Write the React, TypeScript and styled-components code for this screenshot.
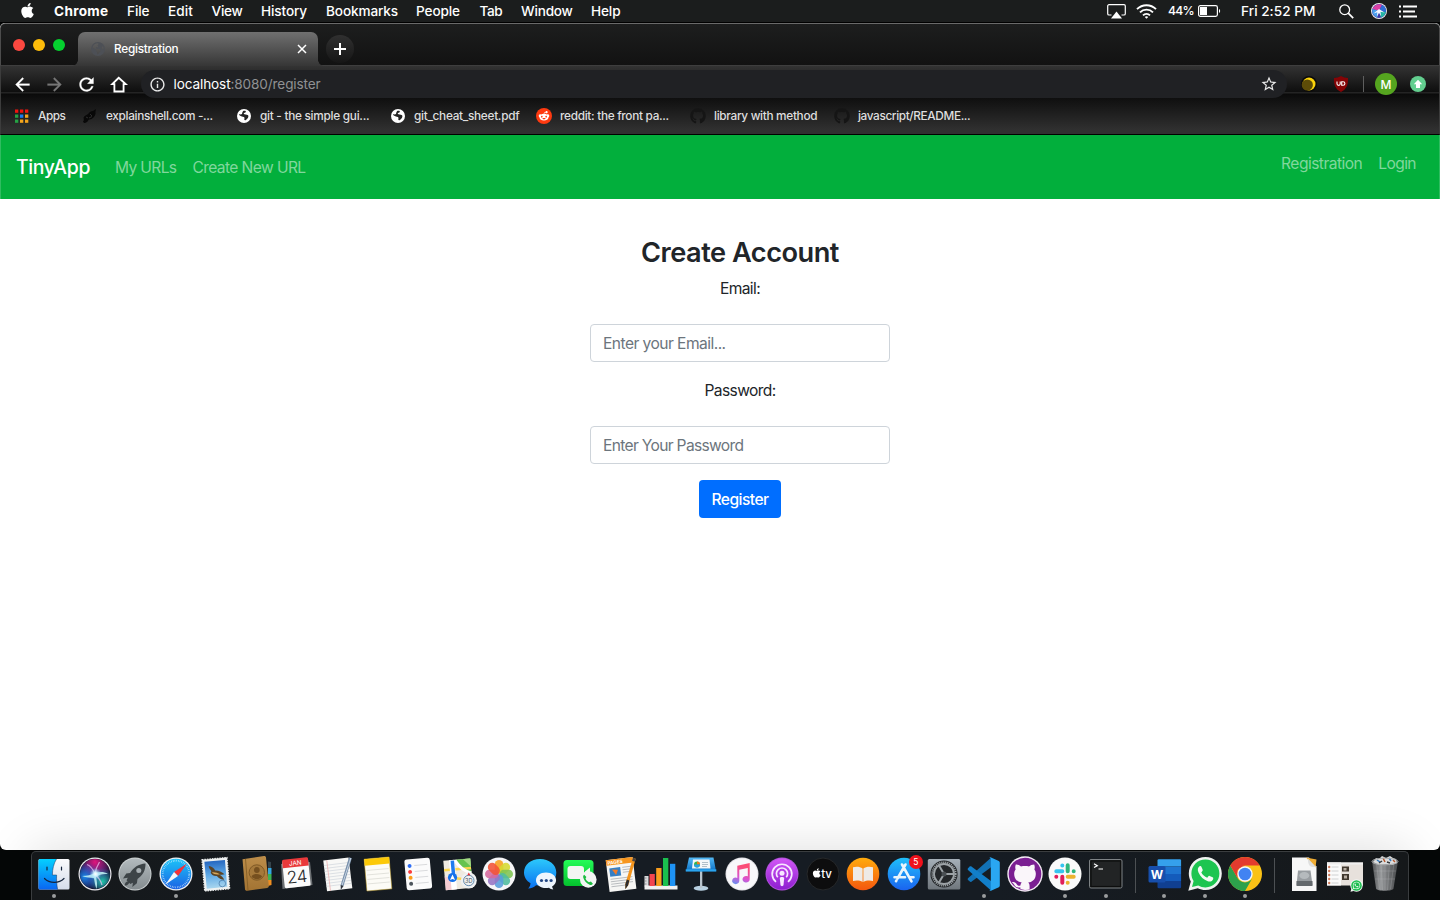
import React from 'react';
import styled, { createGlobalStyle, css } from 'styled-components';
import { FaApple, FaEarthAmericas, FaGithub, FaRedditAlien, FaWhatsapp } from 'react-icons/fa6';
import { MdArrowBack, MdArrowForward, MdRefresh, MdStarBorder, MdInfoOutline } from 'react-icons/md';

const Global = createGlobalStyle`
  * { box-sizing: border-box; }
  body { margin: 0; background: #050707; font-family: Inter, "Liberation Sans", sans-serif; overflow: hidden; }
`;

const Desktop = styled.div`
  width: 1440px;
  height: 900px;
  display: flex;
  flex-direction: column;
  background: #050707;
`;

/* ---------- menu bar ---------- */

const MenuBar = styled.header`
  flex: none;
  height: 23px;
  display: flex;
  justify-content: space-between;
  align-items: center;
  padding: 0 22px 0 19px;
  background: #1b1d1d;
  border-bottom: 1px solid #000;
  color: #fff;
`;

const MenuGroup = styled.div`
  display: flex;
  align-items: center;
  height: 22px;
`;

const AppleSlot = styled.span`
  width: 35px;
  display: flex;
  svg { width: 17px; height: 17px; margin-top: -2px; }
`;

const MenuItem = styled.span<{ $w: number; $ls?: number; $bold?: boolean }>`
  width: ${(p) => p.$w}px;
  font-size: 13.6px;
  line-height: 22px;
  font-weight: ${(p) => (p.$bold ? 700 : 500)};
  letter-spacing: ${(p) => p.$ls ?? -0.12}px;
  white-space: nowrap;
`;

const Status = styled.span<{ $w: number }>`
  width: ${(p) => p.$w}px;
  display: flex;
  align-items: center;
  flex: none;
  svg { display: block; }
`;

const Percent = styled.span`
  width: 30px;
  font-size: 12.2px;
  font-weight: 500;
  letter-spacing: -0.75px;
  line-height: 22px;
`;

const menus = [
  { label: 'Chrome', w: 73, ls: 0.32, bold: true },
  { label: 'File', w: 41 },
  { label: 'Edit', w: 43.5, ls: 0.09 },
  { label: 'View', w: 49.5, ls: -0.25 },
  { label: 'History', w: 65 },
  { label: 'Bookmarks', w: 90 },
  { label: 'People', w: 63.5 },
  { label: 'Tab', w: 41.5, ls: -0.4 },
  { label: 'Window', w: 70, ls: -0.2 },
  { label: 'Help', w: 32 },
];

/* ---------- browser window ---------- */

const Window = styled.main`
  flex: none;
  height: 827px;
  display: flex;
  flex-direction: column;
  border-radius: 5px 5px 6px 6px;
  overflow: hidden;
  background: #fff;
`;

const TabStrip = styled.div`
  flex: none;
  height: 43px;
  display: flex;
  align-items: flex-end;
  padding-left: 12px;
  border: 1px solid #4c4c4c;
  border-top-color: #6a6a6a;
  border-radius: 5px 5px 0 0;
  border-bottom-color: #3e3e3e;
  background: linear-gradient(#1d1e1e, #121212);
`;

const Lights = styled.div`
  display: flex;
  gap: 8px;
  width: 65px;
  padding-bottom: 14px;
`;

const Light = styled.i<{ $c: string }>`
  width: 12px;
  height: 12px;
  border-radius: 50%;
  background: ${(p) => p.$c};
`;

const Tab = styled.div`
  position: relative;
  width: 240px;
  height: 34px;
  margin-bottom: -1px;
  display: flex;
  align-items: center;
  padding: 0 10px 1px 13px;
  border-radius: 7px 7px 0 0;
  color: #fff;
  background: linear-gradient(#707070, #363636);
  > svg:first-child { width: 14px; height: 14px; color: #4d5056; margin-right: 9px; }
  > svg:last-child { width: 12px; height: 12px; }
  &::before, &::after {
    content: '';
    position: absolute;
    bottom: 0;
    width: 6px;
    height: 6px;
  }
  &::before { left: -6px; background: radial-gradient(circle at 0 0, transparent 5.5px, #383838 6px); }
  &::after { right: -6px; background: radial-gradient(circle at 100% 0, transparent 5.5px, #383838 6px); }
`;

const TabTitle = styled.span`
  flex: 1;
  font-size: 11.8px;
  font-weight: 500;
  letter-spacing: -0.26px;
`;

const NewTab = styled.div`
  width: 28px;
  height: 28px;
  margin: 0 0 2px 8px;
  border-radius: 50%;
  display: flex;
  align-items: center;
  justify-content: center;
  color: #fff;
  background: linear-gradient(#303030, #161616);
`;

const Controls = styled.div`
  flex: none;
  height: 69px;
  border: solid #3c3c3c;
  border-width: 0 1px;
  border-bottom: 1px solid #000;
  background: linear-gradient(#333 0, #0e0e0e 26px, #242424 26px, #242424 27px, #0a0a0a 28px, #111 34px, #303030 64px);
`;

const Toolbar = styled.div`
  height: 36px;
  display: flex;
  align-items: center;
  padding-left: 5px;
`;

const NavButton = styled.span<{ $dim?: boolean }>`
  width: 32px;
  flex: none;
  display: flex;
  justify-content: center;
  color: ${(p) => (p.$dim ? '#777' : '#fff')};
  svg { width: 21px; height: 21px; display: block; }
  path:not([fill='none']) { stroke: currentColor; stroke-width: 0.3; }
`;

const HomeGlyph = styled.svg`
  && path { stroke-width: 2.1; }
`;

const Omnibox = styled.div`
  width: 1146px;
  flex: none;
  height: 28px;
  margin-left: 7px;
  border-radius: 14px;
  display: flex;
  align-items: center;
  padding: 0 9px 0 8px;
  background: #202124;
  > svg { width: 17px; height: 17px; color: #e8e8e8; }
  > svg:last-child { width: 18px; height: 18px; }
`;

const Address = styled.span`
  flex: 1;
  padding-left: 7.5px;
  font-size: 13.6px;
  letter-spacing: -0.12px;
  color: #909193;
  b { font-weight: 400; color: #fff; }
`;

const Extension = styled.span<{ $w: number }>`
  width: ${(p) => p.$w}px;
  flex: none;
  display: flex;
  justify-content: center;
`;

const Divider = styled.i`
  width: 1px;
  height: 16px;
  background: #5e5e5e;
`;

const Avatar = styled.span`
  width: 22px;
  height: 22px;
  flex: none;
  border-radius: 50%;
  display: flex;
  align-items: center;
  justify-content: center;
  background: #55a51f;
  color: #fff;
  font-size: 12px;
  font-weight: 500;
`;

const Bookmarks = styled.nav`
  height: 28px;
  display: flex;
  align-items: center;
  padding-left: 13px;
`;

const Bookmark = styled.a<{ $w: number; $ls: number }>`
  width: ${(p) => p.$w}px;
  display: flex;
  align-items: center;
  font-size: 11.8px;
  font-weight: 500;
  letter-spacing: ${(p) => p.$ls}px;
  white-space: nowrap;
  color: #dedede;
  > svg { width: 16px; height: 16px; margin-right: 8px; flex: none; }
`;

/* ---------- page ---------- */

const Navbar = styled.nav`
  flex: none;
  height: 64px;
  display: flex;
  align-items: center;
  padding: 0 23px 0 15px;
  border: solid #2fbd60;
  border-width: 0 1px;
  background: #02af3c;
`;

const Brand = styled.a`
  width: 99px;
  font-size: 19.4px;
  font-weight: 500;
  letter-spacing: -0.35px;
  color: #fff;
`;

const NavLink = styled.a<{ $ls?: number }>`
  margin-right: 16px;
  font-size: 15.6px;
  font-weight: 430;
  letter-spacing: ${(p) => p.$ls ?? -0.6}px;
  color: #80d79d;
  &:last-child { margin-right: 0; }
`;

const Account = styled.div`
  display: flex;
  margin-left: auto;
  padding-bottom: 8px;
`;

const Form = styled.form`
  display: flex;
  flex-direction: column;
  align-items: center;
  padding: 37px 0 0 40px;
  color: #212529;
`;

const Title = styled.h3`
  margin: 0 0 8px;
  font-size: 27.2px;
  line-height: 34px;
  font-weight: 570;
  letter-spacing: -0.5px;
`;

const Label = styled.label`
  height: 24px;
  margin: -1px 0 23px;
  font-size: 15.6px;
  font-weight: 430;
  line-height: 24px;
  letter-spacing: -0.63px;
`;

const Field = styled.input<{ $ls: number }>`
  width: 300px;
  height: 38px;
  margin-bottom: 18px;
  padding: 0 12px;
  border: 1px solid #ced4da;
  border-radius: 4px;
  font: 430 15.6px Inter, sans-serif;
  letter-spacing: ${(p) => p.$ls}px;
  &::placeholder { color: #6c757d; opacity: 1; }
`;

const Submit = styled.button`
  width: 82px;
  height: 38px;
  margin-top: -2px;
  padding: 0;
  border: 0;
  border-radius: 4px;
  background: #006eff;
  color: #fff;
  font: 500 15.6px Inter, sans-serif;
  letter-spacing: -0.55px;
`;

/* ---------- dock ---------- */

const Dock = styled.footer`
  position: relative;
  flex: none;
  align-self: flex-start;
  width: 1378px;
  height: 49px;
  margin: 1px 0 0 31px;
  padding: 2px 0 0 2.2px;
  display: flex;
  border: 1px solid #3a3d3f;
  border-bottom: 0;
  border-radius: 5px 5px 0 0;
  background: linear-gradient(90deg, #15181a, #161c23 30%, #161c23 70%, #15181a);
  box-shadow: 0 0 50px rgba(0, 0, 0, 0.15);
`;

const Slot = styled.div<{ $open?: boolean }>`
  position: relative;
  width: 40.45px;
  height: 46px;
  display: flex;
  justify-content: center;
  > svg { width: 40px; height: 40px; flex: none; overflow: visible; }
  ${(p) => p.$open && css`
    &::after {
      content: '';
      position: absolute;
      bottom: 2px;
      left: 18px;
      width: 4px;
      height: 4px;
      border-radius: 50%;
      background: #9a9c9e;
    }
  `}
`;

const Badge = styled.span`
  position: absolute;
  top: 1px;
  right: 1px;
  width: 14px;
  height: 14px;
  border-radius: 50%;
  background: #f0121c;
  color: #fff;
  font-size: 8.5px;
  line-height: 14px;
  text-align: center;
`;

const DockRule = styled.i`
  width: 1px;
  height: 35px;
  margin: 4px 8.7px 0;
  background: #4c5053;
`;

/* ---------- icons ---------- */

const Grad = ({ id, stops, x2 = 0, y2 = 1 }: { id: string; stops: string[]; x2?: number; y2?: number }) => (
  <linearGradient id={id} x1="0" y1="0" x2={x2} y2={y2}>
    {stops.map((c, i) => <stop key={i} offset={i / (stops.length - 1)} stopColor={c} />)}
  </linearGradient>
);

const Art = ({ children }: { children: React.ReactNode }) => <svg viewBox="0 0 40 40">{children}</svg>;

const Finder = () => (
  <Art>
    <defs><Grad id="fi" stops={['#04d0ff', '#0a66f2']} /><Grad id="fi2" stops={['#fafbfd', '#d5dcea']} /></defs>
    <rect x="4.5" y="5" width="31" height="30.5" rx="1.5" fill="url(#fi2)" />
    <path d="M6 5H22.5C19.5 10 18.5 15 18.4 21h4.2c-.2 5 .2 10 1 14.500H6A1.500 1.500 0 0 1 4.500 34V6.500A1.500 1.500 0 0 1 6 5z" fill="url(#fi)" />
    <path d="M22.500 5C19.500 10 18.500 15 18.400 21h4.200c-.2 5 .2 10 1 14.500" fill="none" stroke="#17355f" strokeWidth=".5" />
    <path d="M10.500 24.500c5 5.200 14.500 5.200 19.500 0M13 13v3M27.500 13v3" fill="none" stroke="#14243c" strokeWidth="1.200" strokeLinecap="round" />
  </Art>
);

const Siri = () => (
  <Art>
    <defs>
      <radialGradient id="si"><stop offset="0" stopColor="#4b5d92" /><stop offset=".55" stopColor="#2b2467" /><stop offset="1" stopColor="#130f24" /></radialGradient>
      <radialGradient id="si2"><stop offset="0" stopColor="#fff" /><stop offset=".3" stopColor="#d8f7ff" stopOpacity=".9" /><stop offset="1" stopColor="#7ad7ff" stopOpacity="0" /></radialGradient>
      <radialGradient id="si3" cx=".5" cy=".1" r=".6"><stop offset="0" stopColor="#e0157c" /><stop offset="1" stopColor="#b31f9a" stopOpacity="0" /></radialGradient>
      <radialGradient id="si4" cx=".15" cy=".6" r=".5"><stop offset="0" stopColor="#1a86e8" /><stop offset="1" stopColor="#1a5fe0" stopOpacity="0" /></radialGradient>
      <radialGradient id="si5" cx=".75" cy=".75" r=".45"><stop offset="0" stopColor="#1fc9a8" /><stop offset="1" stopColor="#1f8fb8" stopOpacity="0" /></radialGradient>
    </defs>
    <circle cx="20" cy="20" r="16.500" fill="#e9e9ee" />
    <circle cx="20" cy="20" r="15.300" fill="url(#si)" />
    <circle cx="20" cy="20" r="15" fill="url(#si3)" />
    <circle cx="20" cy="20" r="15" fill="url(#si4)" />
    <circle cx="20" cy="20" r="15" fill="url(#si5)" />
    <path d="M7 22c5 0 9-1 13-3 5-1.500 9-1.500 13 1-5-.5-9 .5-12 3 1 4 1.500 8 .5 12-1.500-4-2-7-2.500-11-4-.5-8-.5-12-2z" fill="#c4f6f7" opacity=".85" />
    <path d="M20 20c-2-5-4-8-8-9.500M20 20c.500-5 2-8 4.500-12M20 20c4 4 6 7 7 11" stroke="#f0c4f2" strokeWidth="1.300" fill="none" opacity=".7" />
    <circle cx="20.500" cy="20" r="6" fill="url(#si2)" />
  </Art>
);

const Launchpad = () => (
  <Art>
    <defs><Grad id="la" stops={['#b3bbbe', '#848c8f']} /></defs>
    <circle cx="20" cy="20" r="16.500" fill="#cdd2d3" />
    <circle cx="20" cy="20" r="15.600" fill="url(#la)" />
    <path d="M30.500 9.500c-7 .4-12 4-15.400 9.400l-3.800.6-3.300 5 4.800-.8-1.300 2.600 3.800 3.600 2.600-1.200-.6 4.300 4.600-3.700.6-4.200c5.200-3.800 8.200-8.800 8-15.600z" fill="#3d4447" />
    <circle cx="23.800" cy="16.600" r="2.500" fill="#a7afb2" />
    <path d="M13.500 27c-3 .5-3.800 2.500-3.800 4.600 2.300 0 4-1 4.700-3.600z" fill="#3d4447" />
  </Art>
);

const Safari = () => (
  <Art>
    <defs><Grad id="sa" stops={['#1cc3f8', '#1c63e4']} /></defs>
    <circle cx="20" cy="20" r="16.500" fill="#eef0f2" />
    <circle cx="20" cy="20" r="15.200" fill="url(#sa)" />
    <circle cx="20" cy="20" r="13.300" fill="none" stroke="#d8f0ff" strokeWidth="1.800" strokeDasharray=".5 1.240" />
    <path d="M31 9.500 22 22l-4-4z" fill="#f3323a" />
    <path d="M9.500 30.500 18 18l4 4z" fill="#f5f6f8" />
  </Art>
);

const Mail = () => (
  <Art>
    <defs><Grad id="ma" stops={['#2567c0', '#5ea9e6', '#a8d5ee']} /></defs>
    <g transform="rotate(-5 20 20)">
      <rect x="7.200" y="4.500" width="25.200" height="31.500" fill="none" stroke="#f1f3f3" strokeWidth="1.200" strokeDasharray="1.500 1" />
      <rect x="7.300" y="4.600" width="25" height="31.300" fill="#eef1f1" />
      <rect x="9.500" y="6.800" width="20.600" height="27" fill="url(#ma)" />
      <path d="M13.500 11.500c3 .5 5 2.500 6 5 3 0 6.500 2 9 4.500-2 .5-3.500 0-5 0 2 1.500 3.500 3 4.200 5.500-3-.5-5.500-2-7-4.500-3.500 0-5.500-2-6-4 .8-.2 1-1 .5-2.200-1.200-1.200-1.800-2.800-1.700-4.300z" fill="#5b4426" />
      <path d="M16 18c3-.3 5.500 1 8 2.500-3 .6-6.500-.3-8-2.500z" fill="#d6a65a" />
      <circle cx="25.500" cy="30" r="3.300" fill="none" stroke="#4679a8" strokeWidth=".7" />
    </g>
  </Art>
);

const Contacts = () => (
  <Art>
    <defs><Grad id="co" stops={['#bc8d4a', '#a37433']} /></defs>
    <path d="M31 7.500l3 .5v9h-3z" fill="#35434a" /><path d="M31 14h3.500v6H31z" fill="#33a7e0" /><path d="M31 20h3.500v6H31z" fill="#3db454" /><path d="M31 26h3.500v5l-3.500 1z" fill="#ef8f22" />
    <path d="M5.500 5.300 27 2c1-.1 2 .5 2 1.500l2.800 28.400c.1 1-.5 1.800-1.500 2L10 36.800c-1 .1-1.900-.5-2-1.500z" fill="url(#co)" />
    <path d="M8.500 5 11 36.500" stroke="#7f5a25" strokeWidth=".8" />
    <circle cx="19.800" cy="18.500" r="7.700" fill="#a5793b" stroke="#805a26" strokeWidth="1" />
    <circle cx="19.800" cy="16" r="2.900" fill="#76501f" /><path d="M14.500 22.500c1.500-3.400 9-3.400 10.600 0-2.500 3.500-8 3.500-10.600 0z" fill="#76501f" />
  </Art>
);

const Calendar = () => (
  <Art>
    <path d="M4 10 5.500 35l30-4L33 8z" fill="#6c7073" />
    <g transform="rotate(-6 20 20)">
      <rect x="6.500" y="5.500" width="26" height="27.500" rx="1.500" fill="#fbfbfb" />
      <path d="M8 4.300h23a1.500 1.500 0 0 1 1.500 1.500v7h-26v-7A1.500 1.500 0 0 1 8 4.300z" fill="#e9393b" />
      <text x="19.500" y="11.100" fontSize="6.300" fill="#fff" textAnchor="middle">JAN</text>
      <text x="19.500" y="28.600" fontSize="17" fontWeight="300" letterSpacing="-.6" fill="#26282a" textAnchor="middle">24</text>
    </g>
  </Art>
);

const TextEdit = () => (
  <Art>
    <g transform="rotate(-7 20 20)">
      <rect x="8" y="5" width="25.500" height="31" fill="#f8f8f6" />
      <path d="M8 10h25M8 13h25M8 16h25M8 19h25M8 22h25M8 25h25M8 28h25M8 31h25" stroke="#cbd0d8" strokeWidth=".6" />
      <path d="M11.500 5v31" stroke="#eba3a3" strokeWidth=".6" />
    </g>
    <path d="M32 3.200l2.800 1L26.500 32l-2.600 3.500-.2-4.500z" fill="#7990ab" /><path d="M33.800 4 25 31.500" stroke="#cfdbe8" strokeWidth=".9" /><path d="M26.500 32l-2.600 3.500-.2-4.500z" fill="#30343a" />
  </Art>
);

const Notes = () => (
  <Art>
    <g transform="rotate(-5 20 20)">
      <rect x="7.500" y="4" width="25" height="32" fill="#fcfbf6" stroke="#c8a62d" strokeWidth=".5" />
      <path d="M7.500 4h25v6.500h-25z" fill="#fcc908" />
      <path d="M9 15.500h22M9 20h22M9 24.500h22M9 29h22" stroke="#d8d8d2" strokeWidth=".7" />
    </g>
  </Art>
);

const Reminders = () => (
  <Art>
    <g transform="rotate(-5 20 20)">
      <rect x="7.500" y="4.500" width="25.500" height="31" rx="2.500" fill="#fbfbfb" />
      {[['#2d6df5', 11.200], ['#fb3b3b', 17.200], ['#fc9d17', 23.200], ['#4e565c', 29.200]].map(([c, y]) => (
        <g key={y}><circle cx="12.300" cy={y} r="2" fill={c as string} /><path d={`M17 ${y}h13`} stroke="#d2d3d6" strokeWidth=".8" /></g>
      ))}
    </g>
  </Art>
);

const Maps = () => (
  <Art>
    <g transform="rotate(-5 20 20)">
      <rect x="5.500" y="5.500" width="27" height="29.500" fill="#efeae0" />
      <path d="M18 5.500h14.500V24z" fill="#66c34f" /><path d="M25 5.500h7.500v8z" fill="#a4db84" />
      <path d="M5.500 21l10 6v8h-10z" fill="#f5cbd2" /><path d="M5.500 15h27M16 24l16 3" stroke="#fdd64e" strokeWidth="2.500" />
      <path d="M17 6c4 8 9 12 15.500 14" stroke="#fff" strokeWidth="3" fill="none" />
      <path d="M14 5.500V35" stroke="#fff" strokeWidth="5.500" /><path d="M14.500 6v18" stroke="#1f7bef" strokeWidth="3.500" />
    </g>
    <circle cx="13.500" cy="23.500" r="4.600" fill="#1571ea" /><path d="M13.500 20.500l2.500 5.500-2.500-1-2.500 1z" fill="#fff" />
    <circle cx="29.800" cy="26.500" r="8" fill="#eff1f2" /><circle cx="29.800" cy="26.500" r="5.200" fill="none" stroke="#41709b" strokeWidth=".8" />
    <text x="29.800" y="28.600" fontSize="5.600" fill="#475563" textAnchor="middle">3D</text><path d="M29.800 18.600l1.500 2.600h-3z" fill="#e92e32" />
  </Art>
);

const petals = ['#f8a01b', '#d6da30', '#7fc452', '#50bd9d', '#599ddb', '#9675c4', '#d6699d', '#f25336'];

const Photos = () => (
  <Art>
    <circle cx="20" cy="20" r="16.500" fill="#f6f6f8" />
    {petals.map((c, i) => (
      <rect key={c} x="15.700" y="6" width="8.600" height="13.500" rx="4.300" fill={c} opacity=".88" transform={`rotate(${i * 45} 20 20)`} />
    ))}
  </Art>
);

const Messages = () => (
  <Art>
    <defs><Grad id="ms" stops={['#2cc8fb', '#0a72f2']} /></defs>
    <path d="M20 5C11 5 4 10.700 4 18.500c0 4.500 2.500 8.400 6.500 10.800-.2 2.400-1 4-2.400 5.200 3.600-.2 6.200-1.400 8-3.300C29 33 36.300 27 36.300 18.500 36.300 10.700 29 5 20 5z" fill="url(#ms)" />
    <path d="M26 18.500c-5.800 0-10 3.300-10 7.800s4.200 7.800 10 7.800c1 0 2-.1 3-.3 1.200 1 2.600 1.600 4.300 1.700-.6-.8-1-1.900-1.200-3 2.500-1.400 4-3.600 4-6.200 0-4.500-4.300-7.800-10.100-7.800z" fill="#edf5fd" />
    <circle cx="21.500" cy="26.500" r="1.600" fill="#234886" /><circle cx="26.300" cy="26.500" r="1.600" fill="#234886" /><circle cx="31.100" cy="26.500" r="1.600" fill="#234886" />
  </Art>
);

const FaceTime = () => (
  <Art>
    <defs><Grad id="ft" stops={['#24fb58', '#04c12d']} /></defs>
    <rect x="3.500" y="6" width="30" height="26" rx="3.500" fill="url(#ft)" />
    <rect x="7.500" y="12" width="16.500" height="13" rx="3" fill="#f2f5f2" /><path d="M25 17.500l5-4v11l-5-3.500z" fill="#f2f5f2" />
    <circle cx="28.300" cy="25.500" r="8.300" fill="#f3f5f4" />
    <path d="M24.200 20.800c-.9.600-1.300 1.700-.9 3 1 3.300 3.300 5.700 6.300 6.900 1.400.5 2.600.1 3.300-1l-2-2.200-1.900.8c-1.600-.8-2.800-2-3.500-3.700l.9-1.600z" fill="#1bbb3f" />
  </Art>
);

const Pages = () => (
  <Art>
    <g transform="rotate(-7 20 20)">
      <rect x="6.500" y="4.500" width="27" height="32" fill="#f6f6f4" /><path d="M6.500 4.500h27V10h-27z" fill="#f7951d" />
      <text x="8" y="9.200" fontSize="4.600" fontWeight="700" fill="#fff">PAGES</text>
      <path d="M9 13h11v8.500H9z" fill="#357fc5" /><path d="M11.500 14.500l6 1-2.500 5z" fill="#f47b27" />
      <path d="M22 13.500h9M22 16h9M22 18.500h9M9 24h22M9 26.500h22M9 29h22M9 31.500h15" stroke="#b5b8bb" strokeWidth=".9" />
    </g>
    <path d="M32 3.800l2.700 1L27.300 31l-2.800 4-.2-5z" fill="#f3941c" /><path d="M32 3.800l2.700 1-1 3-2.600-1z" fill="#4a4542" /><path d="M25.800 25.500l2.500 1-1.200 4.800-2.800 4 .1-5z" fill="#2c2c2e" />
  </Art>
);

const Numbers = () => (
  <Art>
    <path d="M3.500 22h4v10.500h-4z" fill="#d8d9db" /><path d="M3.500 31.500h33v4h-33z" fill="#f1f1f2" />
    <path d="M4 24h1.500M4 27h1.500M4 30h1.500" stroke="#777" strokeWidth=".7" />
    <rect x="8.500" y="20" width="5.300" height="12" fill="#f2454f" /><rect x="15.200" y="14" width="5.300" height="18" fill="#f99e1d" />
    <rect x="22" y="4" width="5.300" height="28" fill="#1ac04e" /><rect x="29" y="9.800" width="5.300" height="22.200" fill="#1e93f5" />
  </Art>
);

const Keynote = () => (
  <Art>
    <defs><Grad id="ke" stops={['#53b9f5', '#0a6fc4']} /></defs>
    <ellipse cx="20" cy="34.300" rx="7.300" ry="2.500" fill="#b8d0e1" /><path d="M19 17h2.300v17H19z" fill="#b8c4cd" />
    <path d="M8 3.500h24.500L35 17.300H5z" fill="url(#ke)" /><path d="M4.700 15.300h30.600v2.200H4.700z" fill="#2ba4ee" />
    <path d="M12 5.500h16.500l1 9h-18.500z" fill="#f4f7f9" />
    <circle cx="16" cy="10.500" r="3" fill="#3bb44a" /><path d="M16 10.500v-3a3 3 0 0 1 3 3z" fill="#f4771d" /><path d="M13 10.500h6a3 3 0 0 1-6 0z" fill="#269fe8" />
    <path d="M21 8.500h6M21 10.500h6M21 12.500h5" stroke="#9fb0bc" strokeWidth=".8" />
  </Art>
);

const Music = () => (
  <Art>
    <defs><Grad id="mu" stops={['#fb4d76', '#d955d3', '#3fa4f8']} x2={-0.300} /></defs>
    <circle cx="20" cy="20" r="16.500" fill="#e4e4e8" /><circle cx="20" cy="20" r="15.500" fill="#f8f8fa" />
    <path d="M15.300 11.800 27.700 9v16.200a3.600 3.300 0 1 1-1.900-2.900V13.900l-8.500 1.900v11a3.600 3.300 0 1 1-2-2.900z" fill="url(#mu)" />
  </Art>
);

const Podcasts = () => (
  <Art>
    <defs><Grad id="po" stops={['#d257f6', '#8e1ed0']} /></defs>
    <circle cx="20" cy="20" r="16.500" fill="#b252dc" /><circle cx="20" cy="20" r="15.600" fill="url(#po)" />
    <g fill="none" stroke="#f7e8ff" strokeWidth="1.700">
      <path d="M14 27.800a9.800 9.800 0 1 1 12 0" /><path d="M15.800 23.300a5.600 5.600 0 1 1 8.400 0" />
    </g>
    <circle cx="20" cy="19.300" r="2.500" fill="#f7e8ff" /><path d="M17.800 24c0-1.500 4.400-1.500 4.400 0l-.7 7c-.2 1.500-2.800 1.500-3 0z" fill="#f7e8ff" />
  </Art>
);

const AppleTv = () => (
  <Art>
    <circle cx="20" cy="20" r="16" fill="#0d0d0e" stroke="#26282a" />
    <FaApple x={8.500} y={13.700} size={10.500} color="#fff" />
    <text x="18.200" y="24" fontSize="11.500" fontWeight="500" fill="#fff">tv</text>
  </Art>
);

const Books = () => (
  <Art>
    <defs><Grad id="bo" stops={['#ffab0c', '#f4570f']} /></defs>
    <circle cx="20" cy="20" r="16.300" fill="url(#bo)" />
    <path d="M19.600 14.500c-2.500-2-6.500-2.300-9.600-1.200V27c3-.8 7-.7 9.600 1zM20.400 14.500c2.500-2 6.500-2.300 9.600-1.200V27c-3-.8-7-.7-9.600 1z" fill="#eeeae6" />
  </Art>
);

const AppStore = () => (
  <Art>
    <defs><Grad id="as" stops={['#1fc0fb', '#1a63ef']} /></defs>
    <circle cx="20" cy="20" r="16.300" fill="url(#as)" />
    <g stroke="#eaf5fc" strokeWidth="2.600" strokeLinecap="round"><path d="M21.500 10.500 13.500 24.500M18 10.500l9.500 16.800M10.500 23.200h10.500M25.500 23.200h4M12 27.200l.5-.8" /></g>
  </Art>
);

const Preferences = () => (
  <Art>
    <defs><Grad id="pr" stops={['#a5afb8', '#70777d']} /></defs>
    <rect x="3.800" y="5" width="32.500" height="30.500" rx="1.500" fill="url(#pr)" />
    <circle cx="20" cy="20" r="13.600" fill="#24272a" /><circle cx="20" cy="20" r="11.700" fill="none" stroke="#9da3a7" strokeWidth="1.800" strokeDasharray="1.100 .9" />
    <circle cx="20" cy="20" r="10" fill="none" stroke="#9da3a7" strokeWidth="1.800" />
    <path d="M20 20h10M20 20l-5-8.500M20 20l-5 8.500" stroke="#9da3a7" strokeWidth="2" /><circle cx="20" cy="20" r="2.500" fill="#4b5054" />
  </Art>
);

const VsCode = () => (
  <Art>
    <path d="M27 3.800 4 24.300c-.5.500-.5 1.200 0 1.700l1.800 1.600c.5.400 1.100.4 1.600.1L29 11.800z" fill="#1272b6" />
    <path d="M27 36.500 4 15.900c-.5-.5-.5-1.200 0-1.700l1.800-1.600c.5-.4 1.100-.4 1.600-.1L29 28.500z" fill="#127fca" />
    <path d="M27 3.500 34.800 7c.6.300 1 .9 1 1.600v23c0 .7-.4 1.300-1 1.600L27 36.700c-.8.300-1.500.1-2-.6.800.6 1.800 0 1.800-1V5c0-1-1-1.600-1.800-1 .5-.6 1.200-.8 2-.5z" fill="#2aa7f2" />
  </Art>
);

const GitHubDesktop = () => (
  <Art>
    <defs><clipPath id="gh"><circle cx="20" cy="20" r="16" /></clipPath></defs>
    <circle cx="20" cy="20" r="17.700" fill="#f4ecf5" /><circle cx="20" cy="20" r="16.300" fill="#7b1f92" />
    <g clipPath="url(#gh)">
      <path d="M10.800 10.500c2.200 0 4 .9 5.200 2 2.600-.6 5.400-.6 8 0 1.300-1.100 3.100-2 5.200-2 .7 1.900.7 3.500.2 5 1.400 1.800 1.700 4 1.200 6.500-.8 4-3.600 6-7.400 6.600 1 1 1.400 2 1.400 3.600V38h-9.200v-4.500c-4 .6-5.300-1.200-6.300-3-.6-1-1.400-1.500-2.200-2.200 2.500-.8 4 .8 5 2.300.9 1.300 2 1.500 3.500 1 .1-1.200.5-2.200 1.300-3-3.800-.6-6.500-2.600-7.300-6.600-.5-2.500-.2-4.700 1.200-6.500-.5-1.500-.5-3.100.2-5z" fill="#faf6fa" />
    </g>
  </Art>
);

const Slack = () => (
  <Art>
    <circle cx="20" cy="20" r="16.500" fill="#fafafa" />
    <g strokeWidth="4" strokeLinecap="round">
      <path d="M17.300 11.500v.01M11.300 17.300h6" stroke="#36c5f0" /><path d="M28.700 17.300v.01M22.700 11.300v6" stroke="#2eb67d" />
      <path d="M22.700 28.700v.01M22.700 22.700h6" stroke="#ecb22e" /><path d="M11.300 22.700v.01M17.300 22.700v6" stroke="#e01e5a" />
    </g>
  </Art>
);

const Terminal = () => (
  <Art>
    <rect x="3.500" y="5.500" width="32.500" height="28.500" rx="1.500" fill="#222425" stroke="#7d8285" strokeWidth="1" />
    <rect x="5" y="7" width="29.500" height="25.500" fill="none" stroke="#0d0e0e" strokeWidth="1.200" />
    <path d="M8 9.800l3.300 1.900L8 13.600M12.500 15h4.500" stroke="#fff" strokeWidth="1.200" fill="none" />
  </Art>
);

const Word = () => (
  <Art>
    <path d="M12.500 6.500A1.300 1.300 0 0 1 13.800 5.200h21A1.300 1.300 0 0 1 36.100 6.500v6H12.500z" fill="#35a0ec" /><path d="M12.500 12.500h23.600V20H12.500z" fill="#1e74d0" />
    <path d="M12.500 20h23.600v7H12.500z" fill="#145bbb" /><path d="M12.500 27h23.600v6a1.300 1.300 0 0 1-1.300 1.300h-21A1.300 1.300 0 0 1 12.500 33z" fill="#103f91" />
    <rect x="3.500" y="12" width="17" height="16.500" rx="1.500" fill="#174fac" />
    <text x="12" y="24.600" fontSize="12" fontWeight="700" fill="#fff" textAnchor="middle">W</text>
  </Art>
);

const WhatsApp = () => (
  <Art>
    <path d="M20.500 3C11 3 3.800 10.300 3.800 19.500c0 3 .8 5.600 2 8L3.300 36.700l9.500-2.400c2.300 1.100 4.900 1.800 7.700 1.800 9.200 0 16.300-7.400 16.300-16.600S29.700 3 20.500 3z" fill="#f0f3f1" />
    <path d="M20.500 5.500c-8 0-14.100 6.200-14.100 14 0 2.800.7 5.300 2.200 7.500L7 33l6.200-1.600c2.200 1.300 4.600 2 7.300 2 7.800 0 13.900-6.200 13.900-13.900S28.300 5.500 20.500 5.500z" fill="#1dc550" />
    <path d="M14.500 12.300c-1.800 1.300-2.200 3.500-1 6.200 2 4.300 5 7.200 9.300 8.700 2.500.8 4.800-.2 5.400-2.300.2-.8 0-1.300-.6-1.600l-3-1.400c-.6-.3-1 0-1.400.5l-1 1.300c-2.600-1-4.600-2.800-5.900-5.200l1.100-1.500c.4-.5.400-.9.200-1.400l-1.200-2.900c-.3-.8-1-1-1.900-.4z" fill="#f5faf6" />
  </Art>
);

const Chrome = () => (
  <Art>
    <circle cx="20" cy="20" r="17" fill="#fbc216" />
    <path d="M5.280 11.500A17 17 0 0 1 34.720 11.500H20a8.500 8.500 0 0 0-7.360 4.250z" fill="#e33b2e" />
    <path d="M5.280 11.500 12.640 24.250A8.500 8.500 0 0 0 27.360 24.250L20 37A17 17 0 0 1 5.280 11.500z" fill="#2da14c" />
    <path d="M5.280 11.500 12.640 24.250 12.640 15.750 20 11.500z" fill="#e33b2e" />
    <circle cx="20" cy="20" r="7.700" fill="#f5f7fa" /><circle cx="20" cy="20" r="6.300" fill="#4183f2" />
  </Art>
);

const DiskImage = () => (
  <Art>
    <path d="M8 3.500h17l7.500 9V37H8z" fill="#f7f7f7" /><path d="M22 3.500l10.500 2-1 8z" fill="#f0ad34" /><path d="M24 4.500l8 8.500c-3 .3-5.500-.3-6.500-1.500s-1.700-4-1.500-7z" fill="#dfe0e0" />
    <path d="M14 16.500h12.500L28.500 31H12.500z" fill="#989da1" /><path d="M12.500 27h16v5h-16z" fill="#64696d" /><ellipse cx="20.300" cy="21.500" rx="5" ry="3.500" fill="#b5babd" />
  </Art>
);

const Minimized = () => (
  <Art>
    <rect x="2" y="8.500" width="36" height="23" fill="#e7e1dc" /><path d="M2 8.500h14v23H2z" fill="#fafafa" /><path d="M2 8.500h36v2H2z" fill="#f0efef" />
    {[13, 17, 21, 25, 29].map((y) => <g key={y}><circle cx="4.200" cy={y} r="1.200" fill="#cf7b5c" /><path d={`M6.500 ${y}h7`} stroke="#c4c6c8" strokeWidth=".8" /></g>)}
    <path d="M17 12.500h7v5h-7zM17 20h7v6h-7z" fill="#42392f" /><path d="M18.500 14h3v2.500h-3zM19 21.500h3v3h-3z" fill="#b8aea3" />
    <path d="M25.500 37.800l1-3.600 2 2.800z" fill="#f3f6f3" /><circle cx="31.500" cy="31.500" r="6.200" fill="#f3f6f3" /><circle cx="31.500" cy="31.500" r="5.300" fill="#1fbf51" />
    <FaWhatsapp x={27.200} y={27.200} size={8.600} color="#fff" />
  </Art>
);

const Trash = () => (
  <Art>
    <defs><Grad id="tr" stops={['#56585a', '#a5a7a9', '#77797b', '#4c4e50']} x2={1} y2={0} /></defs>
    <path d="M7 7 11 34.500c.5 3 17 3 17.500 0L33 7z" fill="url(#tr)" opacity=".9" />
    <path d="M11.500 9l3 26M16 9l1.500 27M20 9v27M24.500 9 22.500 36M29 9l-3.500 26M9 17h22M10 25h20" stroke="#c6c8c9" strokeWidth=".4" opacity=".6" />
    <path d="M8 8l3-4 3 1 3-3 4 2 4-2 3 2 3 1 1 4-5 2-6-1-7 1z" fill="#dcdddd" />
    <path d="M12 6l3 2M24 4l2 3" stroke="#3678b8" strokeWidth="1.500" /><path d="M18 4l2 4M28 6l2 2" stroke="#b6592f" strokeWidth="1.500" /><path d="M14 9l3-2M22 8l3 1" stroke="#34393d" strokeWidth="1.500" />
    <ellipse cx="20" cy="7.500" rx="13" ry="3.300" fill="none" stroke="#a9abad" strokeWidth="1" />
  </Art>
);

type DockItem = { icon: () => React.ReactElement; open?: boolean; badge?: string };
const dockApps: DockItem[] = [
  { icon: Finder, open: true }, { icon: Siri }, { icon: Launchpad }, { icon: Safari, open: true }, { icon: Mail }, { icon: Contacts },
  { icon: Calendar }, { icon: TextEdit }, { icon: Notes }, { icon: Reminders }, { icon: Maps }, { icon: Photos }, { icon: Messages },
  { icon: FaceTime }, { icon: Pages }, { icon: Numbers }, { icon: Keynote }, { icon: Music }, { icon: Podcasts }, { icon: AppleTv },
  { icon: Books }, { icon: AppStore, badge: '5' }, { icon: Preferences }, { icon: VsCode, open: true }, { icon: GitHubDesktop },
  { icon: Slack, open: true }, { icon: Terminal, open: true },
];
const dockRecent: DockItem[] = [{ icon: Word, open: true }, { icon: WhatsApp, open: true }, { icon: Chrome, open: true }];
const dockFiles: DockItem[] = [{ icon: DiskImage }, { icon: Minimized }, { icon: Trash }];

const DockItems = ({ items }: { items: DockItem[] }) => (
  <>
    {items.map(({ icon: Icon, open, badge }, i) => (
      <Slot key={i} $open={open}><Icon />{badge && <Badge>{badge}</Badge>}</Slot>
    ))}
  </>
);

/* ---------- bookmark and toolbar glyphs ---------- */

const AppsGlyph = () => (
  <svg viewBox="0 0 16 16">
    {['#f0140e', '#f0140e', '#f0140e', '#25a244', '#1c7df0', '#f5a51b', '#25a244', '#f5a51b', '#f5a51b'].map((c, i) => (
      <rect key={i} x={1 + (i % 3) * 5} y={1.500 + Math.floor(i / 3) * 5} width="3.300" height="3.300" fill={c} />
    ))}
  </svg>
);

const ShellGlyph = () => (
  <svg viewBox="0 0 16 16"><path d="M1 13.500c1-1 1-2 .5-4C3 7 5 7 6.500 5.500 7.500 4 9 3 11 3l3-2-.5 2.500c.5 3-1 6-4 7.500l-3 .8c-.5 2-2 3.200-4.500 3.200z" fill="#080808" /><path d="M4 9l2 1M8 6l2 2M7 10l3-1.500" stroke="#3b3b3b" strokeWidth=".7" /></svg>
);

const GlobeGlyph = () => (
  <svg viewBox="0 0 16 16"><circle cx="8" cy="8" r="7" fill="#fff" /><path d="M7.500 2.800c1.500-.3 2.700.2 2.300 1.200s-2 .6-2.200 1.800c.9.900 3 .5 4.500 1.500.8 1.200 0 3.300-2.200 4.700-1.300.9-2-.4-1.400-1.700.2-1.300-1.200-1.700-2.600-1.900C4.300 8.200 3 7.200 3 6.300c1 .1 2.200.4 3-.2.200-1.200.4-2.500 1.500-3.300z" fill="#242424" /></svg>
);

const RedditGlyph = () => (
  <svg viewBox="0 0 16 16"><circle cx="8" cy="8" r="8" fill="#ff3a10" /><FaRedditAlien x={2.500} y={2.300} size={11} color="#fff" /></svg>
);

const bookmarks = [
  { label: 'Apps', w: 68, ls: -0.45, icon: <AppsGlyph /> },
  { label: 'explainshell.com -...', w: 154, ls: -0.34, icon: <ShellGlyph /> },
  { label: 'git - the simple gui...', w: 154, ls: -0.27, icon: <GlobeGlyph /> },
  { label: 'git_cheat_sheet.pdf', w: 146, ls: -0.29, icon: <GlobeGlyph /> },
  { label: 'reddit: the front pa...', w: 154, ls: -0.3, icon: <RedditGlyph /> },
  { label: 'library with method', w: 144, ls: -0.31, icon: <FaGithub color="#151515" /> },
  { label: 'javascript/README...', w: 150, ls: -0.37, icon: <FaGithub color="#151515" /> },
];

const StatusIcons = () => (
  <MenuGroup>
    <Status $w={29}>
      <svg width="19" height="15" viewBox="0 0 19 15"><path d="M4.500 11H2A1.300 1.300 0 0 1 .7 9.700V2A1.300 1.300 0 0 1 2 .7h15A1.300 1.300 0 0 1 18.300 2v7.700A1.300 1.300 0 0 1 17 11h-2.500" fill="none" stroke="#fff" strokeWidth="1.200" /><path d="M9.500 7.500 15 14.500H4z" fill="#fff" /></svg>
    </Status>
    <Status $w={32}>
      <svg width="21" height="15" viewBox="0 0 21 15" fill="none" stroke="#fff" strokeWidth="1.900"><path d="M1 5.200a13.400 13.400 0 0 1 19 0M4 8.400a9.100 9.100 0 0 1 13 0M7 11.400a5 5 0 0 1 7 0" /><path d="M10.500 14.800 8.800 13a2.500 2.500 0 0 1 3.400 0z" fill="#fff" stroke="none" /></svg>
    </Status>
    <Percent>44%</Percent>
    <Status $w={43}>
      <svg width="23" height="12" viewBox="0 0 23 12"><rect x=".6" y=".6" width="18.800" height="10.800" rx="1.800" fill="none" stroke="#fff" strokeWidth="1.200" /><path d="M2 2h7v8H2zM21 4c1.600.5 1.600 3.500 0 4z" fill="#fff" /></svg>
    </Status>
    <MenuItem $w={98} $ls={0.02}>Fri 2:52 PM</MenuItem>
    <Status $w={32}>
      <svg width="15" height="15" viewBox="0 0 15 15" fill="none" stroke="#fff" strokeWidth="1.300"><circle cx="5.700" cy="5.700" r="4.900" /><path d="M9.200 9.200l5 5" strokeWidth="1.700" /></svg>
    </Status>
    <Status $w={28}>
      <svg width="16" height="16" viewBox="0 0 16 16"><circle cx="8" cy="8" r="8" fill="#eee" /><circle cx="8" cy="8" r="7" fill="#3a3aa8" /><path d="M1.500 6C3 2 8 0 11 2L8 8z" fill="#dc3fa4" /><path d="M11 2c3 1 4.500 4 4 7L8 8z" fill="#2f6cd4" /><path d="M15 9c-1 3-3 5-5 5.500L8 8z" fill="#25b7a5" /><path d="M1.500 6C.5 10 3 13 6 14.500L8 8z" fill="#4aa0ec" /><path d="M2.500 10.500 8 6l5.500 3.500-4-.8.5 4.500-2-3.500-2 4 .3-4.500z" fill="#f5f6ff" /></svg>
    </Status>
    <Status $w={19}>
      <svg width="19" height="13" viewBox="0 0 19 13" fill="#fff"><path d="M0 .5h2v2H0zM4 .5h14v2H4zM0 5.500h2v2H0zM4 5.500h12v2H4zM0 10.500h2v2H0zM4 10.500h14v2H4z" /></svg>
    </Status>
  </MenuGroup>
);

export default function App() {
  return (
    <Desktop>
      <Global />
      <MenuBar>
        <MenuGroup>
          <AppleSlot><FaApple /></AppleSlot>
          {menus.map((m) => <MenuItem key={m.label} $w={m.w} $ls={m.ls} $bold={m.bold}>{m.label}</MenuItem>)}
        </MenuGroup>
        <StatusIcons />
      </MenuBar>
      <Window>
        <TabStrip>
          <Lights><Light $c="#fc4840" /><Light $c="#fdbc0a" /><Light $c="#05d12f" /></Lights>
          <Tab>
            <FaEarthAmericas />
            <TabTitle>Registration</TabTitle>
            <svg viewBox="0 0 12 12" stroke="#fff" strokeWidth="1.500"><path d="M2 2l8 8M10 2l-8 8" /></svg>
          </Tab>
          <NewTab>
            <svg width="12" height="12" viewBox="0 0 12 12" stroke="#fff" strokeWidth="2"><path d="M6 0v12M0 6h12" /></svg>
          </NewTab>
        </TabStrip>
        <Controls>
          <Toolbar>
            <NavButton><MdArrowBack /></NavButton>
            <NavButton $dim><MdArrowForward /></NavButton>
            <NavButton><MdRefresh /></NavButton>
            <NavButton>
              <HomeGlyph viewBox="0 0 24 24" fill="none"><path d="M12.300 4.300 4.900 11.500H7.300V20h10.500v-8.500h2.400z" /></HomeGlyph>
            </NavButton>
            <Omnibox>
              <MdInfoOutline />
              <Address><b>localhost</b>:8080/register</Address>
              <MdStarBorder />
            </Omnibox>
            <Extension $w={44}>
              <svg width="16" height="16" viewBox="0 0 16 16"><circle cx="8" cy="8" r="8" fill="#0b0b0b" /><circle cx="8" cy="8" r="6.500" fill="#fbd40b" /><circle cx="6.300" cy="9" r="5.600" fill="#5d4c08" /></svg>
            </Extension>
            <Extension $w={20}>
              <svg width="16" height="16" viewBox="0 0 16 16"><path d="M8 0c2 1.300 4.500 2 7 2 .3 6-1 11-7 14C2 13 .7 8 1 2c2.500 0 5-.7 7-2z" fill="#850406" /><path d="M4 5.500v2.300a1.600 1.600 0 0 0 3.200 0V5.500M8.700 5.700v3.600h1.400a1.800 1.800 0 0 0 0-3.600z" fill="none" stroke="#fff" strokeWidth="1.100" /></svg>
            </Extension>
            <Extension $w={25}><Divider /></Extension>
            <Extension $w={20}><Avatar>M</Avatar></Extension>
            <Extension $w={44}>
              <svg width="16" height="16" viewBox="0 0 16 16"><circle cx="8" cy="8" r="8" fill="#63ce8f" /><path d="M8 3.800l4.200 4.400H10V12H6V8.200H3.800z" fill="#fff" /></svg>
            </Extension>
          </Toolbar>
          <Bookmarks>
            {bookmarks.map((b) => <Bookmark key={b.label} $w={b.w} $ls={b.ls}>{b.icon}{b.label}</Bookmark>)}
          </Bookmarks>
        </Controls>
        <Navbar>
          <Brand>TinyApp</Brand>
          <NavLink $ls={-0.66}>My URLs</NavLink>
          <NavLink>Create New URL</NavLink>
          <Account><NavLink $ls={-0.54}>Registration</NavLink><NavLink>Login</NavLink></Account>
        </Navbar>
        <Form>
          <Title>Create Account</Title>
          <Label>Email:</Label>
          <Field type="email" placeholder="Enter your Email..." $ls={-0.55} />
          <Label>Password:</Label>
          <Field type="password" placeholder="Enter Your Password" $ls={-0.68} />
          <Submit type="button">Register</Submit>
        </Form>
      </Window>
      <Dock>
        <DockItems items={dockApps} />
        <DockRule />
        <DockItems items={dockRecent} />
        <DockRule />
        <DockItems items={dockFiles} />
      </Dock>
    </Desktop>
  );
}
